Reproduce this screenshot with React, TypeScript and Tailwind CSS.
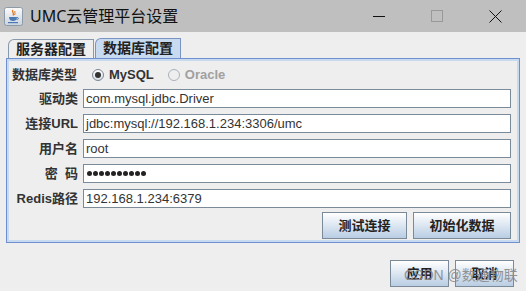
import React from "react"

const cjk = { fontFamily: '"Liberation Sans", "Noto Sans CJK SC", sans-serif' }
const titleFont = { fontFamily: '"Noto Sans", "Noto Sans CJK SC", sans-serif' }

function JavaIcon() {
  return (
    <svg width="19" height="19" viewBox="0 0 19 19">
      <defs>
        <linearGradient id="jg" x1="0" y1="0" x2="0" y2="1">
          <stop offset="0" stopColor="#fbfbfb" />
          <stop offset="1" stopColor="#c9d3de" />
        </linearGradient>
      </defs>
      <rect x="0.5" y="0.5" width="18" height="18" rx="2" fill="url(#jg)" stroke="#8d9aa8" />
      <path d="M9 3 C7 5 11 6 9 8.5" stroke="#e0761c" strokeWidth="1.3" fill="none" />
      <path d="M11 4 C10 5.5 12 6 10.5 8" stroke="#e0761c" strokeWidth="1" fill="none" />
      <path d="M5 10 H13 C13 13 11 14 9 14 C7 14 5 13 5 10 Z" fill="#4a79b3" />
      <path d="M13 10.5 C15 10.5 15 12.5 12.5 12.5" stroke="#4a79b3" strokeWidth="1" fill="none" />
      <rect x="4" y="15" width="10" height="1.2" fill="#4a79b3" />
    </svg>
  )
}

function Field({ label, children }: { label: React.ReactNode; children: React.ReactNode }) {
  return (
    <div className="flex items-center h-[19px]">
      <div className="w-[71px] pr-[5px] text-right text-[13px] font-bold text-[#333] leading-none whitespace-nowrap">{label}</div>
      <div className="w-[428px] h-[19px] bg-white border border-[#7a8a99] flex items-center pl-[2px] text-[13px] text-[#333] leading-none" style={{ fontFamily: '"Liberation Sans", sans-serif' }}>
        {children}
      </div>
    </div>
  )
}

function Button({ children, className }: { children: React.ReactNode; className: string }) {
  return (
    <div className={`h-[27px] border border-[#7a8a99] bg-gradient-to-b from-[#ffffff] to-[#b9cde3] flex items-center justify-center text-[13px] font-bold text-[#222] ${className}`}>
      {children}
    </div>
  )
}

export default function App() {
  return (
    <div className="w-[526px] h-[291px] bg-[#eeeeee] overflow-hidden relative" style={cjk}>
      {/* title bar */}
      <div className="h-[32px] bg-[#bfbfbf] flex items-center">
        <div className="ml-[4px] mt-[1px]"><JavaIcon /></div>
        <div className="ml-[7px] text-[16px] text-[#111]" style={titleFont}>UMC云管理平台设置</div>
        <div className="ml-auto flex items-center h-full">
          <div className="w-[58px] flex justify-center"><div className="w-[12px] h-[1px] bg-[#111]" /></div>
          <div className="w-[58px] flex justify-center"><div className="w-[12px] h-[12px] border border-[#999]" /></div>
          <div className="w-[58px] flex justify-center mr-[2px]">
            <svg width="13" height="13" viewBox="0 0 13 13"><path d="M0.5 0.5 L12.5 12.5 M12.5 0.5 L0.5 12.5" stroke="#111" strokeWidth="1" /></svg>
          </div>
        </div>
      </div>

      {/* tabs */}
      <div className="flex items-end mt-[7px] ml-[8px] h-[19px]">
        <div className="w-[86px] h-[19px] border border-b-0 border-[#8a98ab] rounded-tl-[6px] flex items-center justify-center text-[14px] font-bold text-[#222]">服务器配置</div>
        <div className="ml-[1px] w-[86px] h-[20px] border border-b-0 border-[#7a93c0] rounded-tl-[6px] bg-[#c8daf0] flex items-center justify-center text-[14px] font-bold text-[#222]">数据库配置</div>
      </div>

      {/* panel */}
      <div className="ml-[6px] w-[514px] h-[185px] border border-[#6f8fcf] bg-[#c8daf0] p-[2px]">
        <div className="w-full h-full bg-[#eeeeee] pl-[3px] pt-[3px] flex flex-col">
          <div className="flex items-center h-[22px]">
            <div className="w-[78px] text-[13px] font-bold text-[#333]">数据库类型</div>
            <div className="ml-[2px] w-[12px] h-[12px] rounded-full border border-[#7b8794] bg-gradient-to-b from-white to-[#d8dee6] flex items-center justify-center">
              <div className="w-[6px] h-[6px] rounded-full bg-[#333]" />
            </div>
            <div className="ml-[5px] text-[13px] font-bold text-[#333]">MySQL</div>
            <div className="ml-[14px] w-[12px] h-[12px] rounded-full border border-[#a9b1ba] bg-[#eeeeee]" />
            <div className="ml-[5px] text-[13px] font-semibold text-[#a0a0a0]">Oracle</div>
          </div>
          <div className="flex flex-col gap-[6px] mt-[3px]">
            <Field label="驱动类">com.mysql.jdbc.Driver</Field>
            <Field label="连接URL">jdbc:mysql://192.168.1.234:3306/umc</Field>
            <Field label="用户名">root</Field>
            <Field label={<span>密&nbsp;&nbsp;码</span>}>
              <div className="flex gap-[1px] ml-[1px]">
                {Array.from({ length: 10 }).map((_, i) => (
                  <div key={i} className="w-[5px] h-[5px] rounded-full bg-[#222]" />
                ))}
              </div>
            </Field>
            <Field label="Redis路径">192.168.1.234:6379</Field>
          </div>
          <div className="flex mt-[4px] ml-[310px] gap-[6px]">
            <Button className="w-[85px]">测试连接</Button>
            <Button className="w-[98px]">初始化数据</Button>
          </div>
        </div>
      </div>

      {/* bottom buttons */}
      <div className="flex mt-[17px] ml-[390px] gap-[6px]">
        <Button className="w-[59px]">应用</Button>
        <Button className="w-[59px]">取消</Button>
      </div>
      <div className="absolute left-[404px] top-[265px] text-[14px] text-[#8a8a8a] opacity-90 whitespace-nowrap" style={{ fontFamily: '"Liberation Sans", "Noto Sans CJK SC", sans-serif' }}>
        CSDN @数通物联
      </div>
    </div>
  )
}
